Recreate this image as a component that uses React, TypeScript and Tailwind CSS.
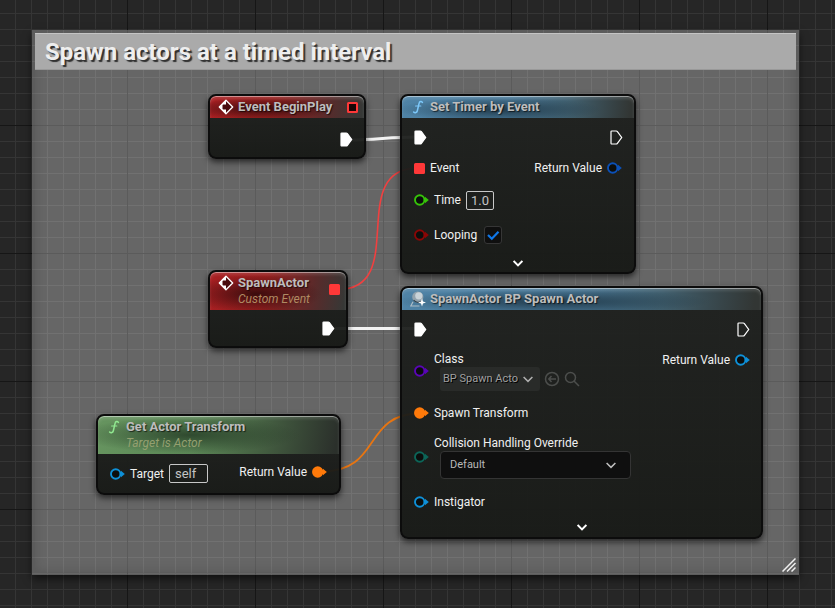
import type { ReactNode } from "react";

const grid =
  "bg-[#262626] bg-[linear-gradient(to_right,#161616_1px,transparent_1px),linear-gradient(to_bottom,#161616_1px,transparent_1px),linear-gradient(to_right,#353535_1px,transparent_1px),linear-gradient(to_bottom,#353535_1px,transparent_1px)] bg-size-[128px_128px,128px_128px,16px_16px,16px_16px] bg-position-[127px_0,0_125px,15px_0,0_13px]";

function ExecPin({ filled = false }: { filled?: boolean }) {
  return (
    <svg width="13" height="15" viewBox="0 0 13 15" className="shrink-0">
      <path
        d="M1.8 1h4.4c.5 0 .9.2 1.2.6l4.3 5.9-4.3 5.9c-.3.4-.7.6-1.2.6H1.8c-.6 0-.8-.3-.8-.8V1.800c0-.5.2-.8.8-.8z"
        fill={filled ? "#fff" : "none"}
        stroke="#fff"
        strokeWidth="1.200"
      />
    </svg>
  );
}

function DataPin({ color, filled = false }: { color: string; filled?: boolean }) {
  return (
    <svg width="15" height="12" viewBox="0 0 15 12" className="shrink-0">
      <path d="M11 2.800 14.800 6 11 9.200z" fill={color} />
      <circle cx="5.700" cy="6" r="4.700" fill={filled ? color : "#0c0e0d"} stroke={color} strokeWidth="1.900" />
    </svg>
  );
}

function DelegatePin({ filled = false }: { filled?: boolean }) {
  return (
    <svg width="11" height="11" viewBox="0 0 11 11" className="shrink-0">
      <rect x="1" y="1" width="9" height="9" rx="0.500" fill={filled ? "#ff3838" : "#1c0505"} stroke="#ff3838" strokeWidth="2" />
    </svg>
  );
}

function EventIcon() {
  return (
    <svg width="16" height="16" viewBox="0 0 16 16" className="shrink-0">
      <path d="M8 1.300 14.700 8 8 14.700 1.300 8z" fill="#4a0d0f" stroke="#fff" strokeWidth="1.300" strokeLinejoin="round" />
      <path d="M8 .8v4.600H4.500v5.200H8v4.600L.8 8z" fill="#fff" />
    </svg>
  );
}

function FunctionIcon({ color }: { color: string }) {
  return (
    <svg width="16" height="16" viewBox="0 0 16 16" className="shrink-0" fill="none" stroke={color} strokeLinecap="round">
      <path d="M12.400 3.400C11.400 2 9.500 2.200 9 4.600L7.400 11.500C7 13.600 5 14.400 3.600 13" strokeWidth="1.500" />
      <path d="M5.600 7h5.200" strokeWidth="1.200" />
    </svg>
  );
}

function SpawnIcon() {
  return (
    <svg width="16" height="16" viewBox="0 0 16 16" className="shrink-0">
      <path d="M3 10.800.800 15h8.700" fill="none" stroke="#aebdc6" strokeWidth="1.200" />
      <circle cx="7.800" cy="6" r="5.600" fill="#93a3ad" />
      <circle cx="8.800" cy="4.800" r="3.600" fill="#c9d3d8" />
      <path d="M3.600 9c2 2.600 5.400 3 7.600 1.200" fill="none" stroke="#2f404b" strokeWidth="1.200" />
      <path d="m12 7.600 1 2.900 3 1-3 1-1 2.900-1-2.900-3-1 3-1z" fill="#fff" />
    </svg>
  );
}

function Chevron({ stroke = "#fff", className = "", weight = 1.5 }: { stroke?: string; className?: string; weight?: number }) {
  return (
    <svg width="10" height="7" viewBox="0 0 10 7" className={className} fill="none" stroke={stroke} strokeWidth={weight}>
      <path d="M.6 1 5 5.400 9.400 1" />
    </svg>
  );
}

const tints = {
  red: "bg-[radial-gradient(ellipse_48%_50%_at_34%_58%,#300a0be6,transparent),linear-gradient(100deg,#a81f22_0%,#98201f_40%,#5a2a2a_75%,#363836_98%)]",
  blue: "bg-[radial-gradient(ellipse_44%_58%_at_42%_62%,#1d3443e6,transparent),linear-gradient(95deg,#4f83a6_0%,#4b7c9d_45%,#41606f_72%,#323634_98%)]",
  green: "bg-[radial-gradient(ellipse_46%_48%_at_38%_50%,#243a25cc,transparent),linear-gradient(100deg,#66945f_0%,#5b8656_40%,#435c40_70%,#2b302b_98%)]",
};

type NodeProps = {
  className: string;
  tint: keyof typeof tints;
  icon: ReactNode;
  title: string;
  subtitle?: string;
  subtitleColor?: string;
  pin?: ReactNode;
  children: ReactNode;
};

function GraphNode({ className, tint, icon, title, subtitle, subtitleColor, pin, children }: NodeProps) {
  return (
    <section
      className={`absolute rounded-lg border-2 border-[#0c0c0c] bg-linear-to-b from-[#1e201ef2] to-[#161815f2] shadow-[0_3px_6px_#000000a0] ${className}`}
    >
      <header
        className={`flex items-center gap-1 rounded-t-md pr-[6px] pl-2 shadow-[inset_0_1px_0_#ffffff70,inset_0_3px_3px_#ffffff20] ${tints[tint]} ${
          subtitle ? "h-[38px]" : "h-[22px]"
        }`}
      >
        <div className={subtitle ? "self-start pt-[3px]" : ""}>{icon}</div>
        <div className="min-w-0 flex-1">
          <h2 className="text-[13px] leading-4 font-bold whitespace-nowrap text-[#bdbdbd] [text-shadow:1px_1px_1px_#000000a0]">{title}</h2>
          {subtitle && <p className={`text-[12px] leading-4 italic ${subtitleColor}`}>{subtitle}</p>}
        </div>
        <div className={subtitle ? "pb-1" : ""}>{pin}</div>
      </header>
      {children}
    </section>
  );
}

function Row({ className, children }: { className: string; children: ReactNode }) {
  return <div className={`flex items-center ${className}`}>{children}</div>;
}

function Wires() {
  return (
    <svg className="pointer-events-none absolute inset-0 size-full" fill="none">
      <path d="M350 140C375 140 390 137 416 137" stroke="#f2f2f2" strokeWidth="3" />
      <path d="M332 328.500H416" stroke="#f2f2f2" strokeWidth="3" />
      <path d="M338 289.500C410 289.500 345 168 418 168" stroke="#f04040" strokeWidth="1.600" />
      <path d="M322 471.500C382 471.500 362 413.500 420 413.500" stroke="#e87511" strokeWidth="1.800" />
    </svg>
  );
}

export default function App() {
  return (
    <main className={`relative h-screen min-h-[608px] overflow-hidden font-['Roboto',sans-serif] text-[12px] leading-4 text-[#f0f0f0] ${grid}`}>
      <section className="absolute top-[30px] right-9 left-8 h-[545px] border-3 border-[#00000018] bg-[#fbfbfb4d] bg-clip-border shadow-[0_4px_8px_#00000090,inset_0_0_12px_#00000026]">
        <h1 className="h-[37px] border-t border-b border-t-[#c4c4c4] border-b-[#999] bg-[#aaa] pl-[10px] text-[24px] leading-[37px] font-bold text-[#eee] [text-shadow:2px_2px_1px_#303030]">
          Spawn actors at a timed interval
        </h1>
        <svg width="14" height="14" viewBox="0 0 14 14" className="absolute right-0 bottom-0" stroke="#f0f0f0" strokeWidth="1.500">
          <path d="M.5 13.500 13.500.5M5 13.500 13.500 5M9.500 13.500l4-4" />
        </svg>
      </section>

      <Wires />

      <GraphNode className="top-[94px] left-[208px] w-[158px]" tint="red" icon={<EventIcon />} title="Event BeginPlay" pin={<DelegatePin />}>
        <Row className="h-[39px] justify-end pt-1 pr-[11px]">
          <ExecPin filled />
        </Row>
      </GraphNode>

      <GraphNode className="top-[94px] left-[400px] w-[236px]" tint="blue" icon={<FunctionIcon color="#7cc8fa" />} title="Set Timer by Event">
        <Row className="h-[38px] justify-between pr-[11px] pl-3">
          <ExecPin filled />
          <ExecPin />
        </Row>
        <Row className="h-6 justify-between px-3">
          <div className="flex items-center gap-[5px]">
            <DelegatePin filled />
            <span>Event</span>
          </div>
          <div className="flex items-center gap-[5px]">
            <span>Return Value</span>
            <DataPin color="#0b50b8" />
          </div>
        </Row>
        <Row className="h-10 gap-[5px] px-3">
          <DataPin color="#36c409" />
          <label htmlFor="time">Time</label>
          <input
            id="time"
            defaultValue="1.0"
            className="h-[19px] w-7 rounded-xs border border-[#c8c8c8] bg-transparent text-center text-[13px] text-[#c4c4c4] outline-none"
          />
        </Row>
        <Row className="h-[30px] gap-[5px] px-3">
          <DataPin color="#8a0606" />
          <label htmlFor="looping">Looping</label>
          <span className="ml-0.5 grid size-[18px]">
            <input
              id="looping"
              type="checkbox"
              defaultChecked
              className="peer col-start-1 row-start-1 size-[18px] appearance-none rounded-[3px] border border-[#363636] bg-[#0f0f0f]"
            />
            <svg viewBox="0 0 18 18" className="pointer-events-none invisible col-start-1 row-start-1 size-[18px] peer-checked:visible" fill="none" stroke="#0f77e8" strokeWidth="2.200">
              <path d="m4 9 3.800 3.700 6.700-7" />
            </svg>
          </span>
        </Row>
        <button aria-label="Show advanced pins" className="flex h-[22px] w-full items-center justify-center pt-1">
          <Chevron weight={2} />
        </button>
      </GraphNode>

      <GraphNode
        className="top-[270px] left-[208px] w-[140px]"
        tint="red"
        icon={<EventIcon />}
        title="SpawnActor"
        subtitle="Custom Event"
        subtitleColor="text-[#b08a62]"
        pin={<DelegatePin filled />}
      >
        <Row className="h-9 justify-end pt-px pr-[11px]">
          <ExecPin filled />
        </Row>
      </GraphNode>

      <GraphNode className="top-[286px] left-[400px] w-[363px]" tint="blue" icon={<SpawnIcon />} title="SpawnActor BP Spawn Actor">
        <div className="flex justify-between pr-[11px] pl-3">
          <div>
            <Row className="h-[38px]">
              <ExecPin filled />
            </Row>
            <Row className="h-[46px] gap-[5px]">
              <DataPin color="#5a05b8" />
              <div>
                <label htmlFor="class" className="block">
                  Class
                </label>
                <div className="ml-1.5 flex items-center gap-1">
                  <span className="grid items-center">
                    <select
                      id="class"
                      className="col-start-1 row-start-1 h-6 w-[100px] appearance-none rounded-[3px] bg-[#292b29] pl-[3px] text-[11px] text-[#a0a0a0] [text-shadow:1px_1px_0_#000]"
                    >
                      <option>BP Spawn Acto</option>
                    </select>
                    <Chevron stroke="#b0b0b0" className="pointer-events-none col-start-1 row-start-1 mr-[7px] justify-self-end" />
                  </span>
                  <button aria-label="Use selected asset">
                    <svg width="16" height="16" viewBox="0 0 16 16" fill="none" stroke="#4c4e4c" strokeWidth="1.500">
                      <circle cx="8" cy="8" r="6.500" />
                      <path d="M12 8H5M7.500 5 4.800 8l2.700 3" />
                    </svg>
                  </button>
                  <button aria-label="Browse to asset">
                    <svg width="16" height="16" viewBox="0 0 16 16" fill="none" stroke="#4c4e4c" strokeWidth="1.500">
                      <circle cx="6.500" cy="6.500" r="5" />
                      <path d="m10 10 5 5" />
                    </svg>
                  </button>
                </div>
              </div>
            </Row>
            <Row className="h-[38px] gap-[5px]">
              <DataPin color="#ff7a0a" filled />
              <span>Spawn Transform</span>
            </Row>
            <Row className="h-[50px] gap-[5px]">
              <DataPin color="#0c6558" />
              <div>
                <label htmlFor="collision" className="block">
                  Collision Handling Override
                </label>
                <span className="ml-1.5 grid items-center">
                  <select
                    id="collision"
                    className="col-start-1 row-start-1 h-7 w-[191px] appearance-none rounded-sm border border-[#343434] bg-[#0f0f0f] pl-[9px] text-[11px] text-[#b8b8b8]"
                  >
                    <option>Default</option>
                  </select>
                  <Chevron stroke="#c0c0c0" className="pointer-events-none col-start-1 row-start-1 mr-[15px] justify-self-end" />
                </span>
              </div>
            </Row>
            <Row className="h-10 gap-[5px]">
              <DataPin color="#0e90d8" />
              <span>Instigator</span>
            </Row>
          </div>
          <div>
            <Row className="h-[38px] justify-end">
              <ExecPin />
            </Row>
            <Row className="h-6 gap-[5px]">
              <span>Return Value</span>
              <DataPin color="#0e90d8" />
            </Row>
          </div>
        </div>
        <button aria-label="Show advanced pins" className="flex h-[15px] w-full items-center justify-center pb-1">
          <Chevron weight={2} />
        </button>
      </GraphNode>

      <GraphNode
        className="top-[414px] left-[96px] w-[245px]"
        tint="green"
        icon={<FunctionIcon color="#90e890" />}
        title="Get Actor Transform"
        subtitle="Target is Actor"
        subtitleColor="text-[#94a070]"
      >
        <div className="flex items-start justify-between px-3">
          <Row className="h-[39px] gap-[5px]">
            <DataPin color="#0e90d8" />
            <label htmlFor="target">Target</label>
            <input
              id="target"
              defaultValue="self"
              className="h-[19px] w-[39px] rounded-xs border border-[#c8c8c8] bg-transparent px-[5px] text-[13px] text-[#c4c4c4] outline-none"
            />
          </Row>
          <Row className="h-9 gap-[5px]">
            <span>Return Value</span>
            <DataPin color="#ff7a0a" filled />
          </Row>
        </div>
      </GraphNode>
    </main>
  );
}
